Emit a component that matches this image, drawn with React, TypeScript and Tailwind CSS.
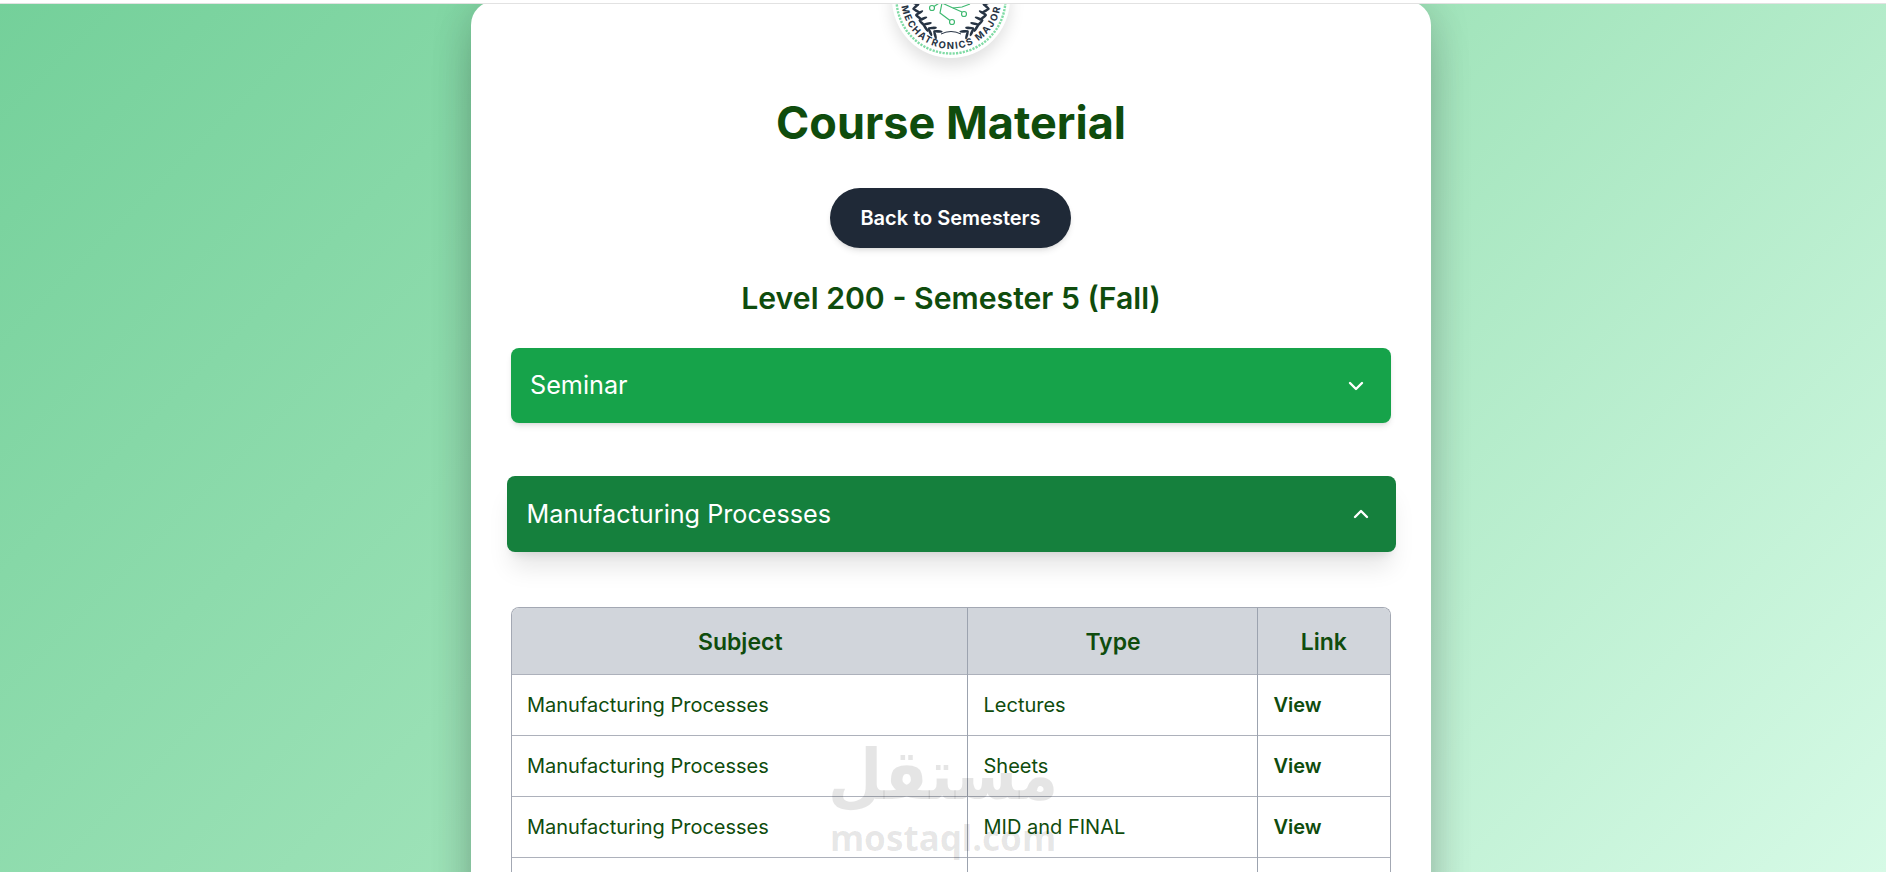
const rows = [
  { subject: "Manufacturing Processes", type: "Lectures" },
  { subject: "Manufacturing Processes", type: "Sheets" },
  { subject: "Manufacturing Processes", type: "MID and FINAL" },
];

const Chevron: React.FC<{ up?: boolean }> = ({ up }) => (
  <svg width="16" height="10" viewBox="0 0 16 10" fill="none" stroke="currentColor" strokeWidth="2.4" strokeLinecap="round" strokeLinejoin="round">
    <path d={up ? "M2 8l6-6 6 6" : "M2 2l6 6 6-6"} />
  </svg>
);

// laurel branch: leaves in pairs along a curve from the bottom to the top of the seal
const branch = Array.from({ length: 7 }).map((_, i) => {
  const t = i / 6;
  const x = (1 - t) * (1 - t) * 42 + 2 * (1 - t) * t * 24 + t * t * 19;
  const y = (1 - t) * (1 - t) * 91 + 2 * (1 - t) * t * 84 + t * t * 62;
  const angle = -140 - t * 55;
  return { x, y, angle };
});

const Logo: React.FC = () => (
  <svg width="118" height="118" viewBox="0 0 118 118" className="rounded-full bg-white shadow-[0_8px_16px_rgba(0,0,0,0.12)]">
    <circle cx="59" cy="59" r="54.5" fill="none" stroke="#80dba5" strokeWidth="2.4" strokeDasharray="2.2 1.2" />
    <defs>
      <path id="ring" d="M9 59a50 50 0 0 0 100 0" />
    </defs>
    <text fontFamily="Inter, sans-serif" fontSize="9.5" fontWeight="700" fill="#273444" letterSpacing="1.5">
      <textPath href="#ring" startOffset="50%" textAnchor="middle">MECHATRONICS MAJOR</textPath>
    </text>
    {branch.map((leaf, i) => (
      <g key={i} fill="#273444">
        <ellipse cx={leaf.x} cy={leaf.y} rx="4.6" ry="1.3" transform={`rotate(${leaf.angle + 35} ${leaf.x} ${leaf.y}) translate(-4 0)`} />
        <ellipse cx={leaf.x} cy={leaf.y} rx="4.6" ry="1.3" transform={`rotate(${leaf.angle - 35} ${leaf.x} ${leaf.y}) translate(-4 0)`} />
        <ellipse cx={118 - leaf.x} cy={leaf.y} rx="4.6" ry="1.3" transform={`rotate(${-leaf.angle + 35} ${118 - leaf.x} ${leaf.y}) translate(4 0)`} />
        <ellipse cx={118 - leaf.x} cy={leaf.y} rx="4.6" ry="1.3" transform={`rotate(${-leaf.angle - 35} ${118 - leaf.x} ${leaf.y}) translate(4 0)`} />
      </g>
    ))}
    <path d="M49 94q10-5 20 0" fill="none" stroke="#273444" strokeWidth="1" />
    <g fill="none" stroke="#3fb971" strokeWidth="1.2">
      <path d="M50 63l-2 10 10 7.500" />
      <path d="M50 63l11 5 9 4" />
      <path d="M42 66.500l6-4" />
      <path d="M78 64l-8 3-9 1" />
      <circle cx="40" cy="68" r="2.500" />
      <circle cx="60" cy="82" r="2.500" />
      <circle cx="72" cy="74" r="2.500" />
    </g>
  </svg>
);

export default function App() {
  return (
    <div className="relative h-[872px] overflow-hidden bg-[linear-gradient(135deg,#74d09a_0%,#9fe3b9_50%,#d6fae6_100%)] font-['Inter',sans-serif] text-[#0f4c0d]">
      <div className="relative z-20 h-1 border-b border-[#e2e2e2] bg-white" />
      <div className="-mt-[3px] ml-[471px] flow-root w-[960px] rounded-t-3xl bg-white px-10 shadow-[0_25px_50px_-12px_rgba(0,0,0,0.25),0_0_40px_rgba(0,0,0,0.15)]">
        <div className="-mt-[61px] flex justify-center">
          <Logo />
        </div>
        <h1 className="mt-[39px] text-center text-[45px] font-bold leading-[52px]">Course Material</h1>
        <div className="mt-[39px] flex justify-center">
          <button className="mr-[2px] h-[60px] w-[241px] pl-px rounded-full bg-[#1f2937] text-xl font-semibold text-white shadow-md">Back to Semesters</button>
        </div>
        <h2 className="mt-8 text-center text-[30.2px] font-semibold leading-9">Level 200 - Semester 5 (Fall)</h2>

        <div className="mt-8 flex h-[75px] items-center justify-between rounded-lg bg-[#16a34a] pl-5 pr-[27px] text-[25.2px] text-white shadow-md">
          <span className="-ml-px">Seminar</span>
          <Chevron />
        </div>
        <div className="-mx-[4.5px] mt-[53px] flex h-[76px] items-center justify-between rounded-lg bg-[#15803d] pl-5 pr-[27px] text-[25.2px] text-white shadow-[0_20px_25px_-5px_rgba(0,0,0,0.1),0_8px_10px_-6px_rgba(0,0,0,0.1)]">
          <span className="mt-px">Manufacturing Processes</span>
          <Chevron up />
        </div>

        <div className="mt-[55px] overflow-hidden rounded-t-lg border-x border-t border-[#a3a8b3]">
          <table className="w-full table-fixed border-collapse">
            <colgroup>
              <col className="w-[455px]" />
              <col className="w-[290px]" />
              <col />
            </colgroup>
            <thead>
              <tr className="h-[66px] bg-[#d1d5db] text-[23px]">
                <th className="pl-[2px] pt-[2px] font-semibold">Subject</th>
                <th className="border-l border-[#9ca3af] pl-[2px] pt-[2px] font-semibold">Type</th>
                <th className="border-l border-[#9ca3af] pt-[2px] font-semibold">Link</th>
              </tr>
            </thead>
            <tbody className="text-xl">
              {rows.map((row, index) => (
                <tr key={index} className="h-[61px] border-t border-[#adb1bb]">
                  <td className="px-[15px]">{row.subject}</td>
                  <td className="border-l border-[#9ca3af] px-4">{row.type}</td>
                  <td className="border-l border-[#9ca3af] px-4 font-semibold">View</td>
                </tr>
              ))}
              <tr className="h-[61px] border-t border-[#adb1bb]">
                <td />
                <td className="border-l border-[#9ca3af]" />
                <td className="border-l border-[#9ca3af]" />
              </tr>
            </tbody>
          </table>
        </div>
      </div>

      <div className="pointer-events-none absolute left-[818px] top-[742px] z-30 flex w-[250px] flex-col items-center text-black/10">
        <span className="origin-bottom scale-y-110 font-['DejaVu_Sans',sans-serif] text-[63px] font-bold leading-[76px]">مستقل</span>
        <span className="font-['Noto_Sans',sans-serif] text-[35px] font-bold leading-[40px]">mostaql.com</span>
      </div>
    </div>
  );
}
